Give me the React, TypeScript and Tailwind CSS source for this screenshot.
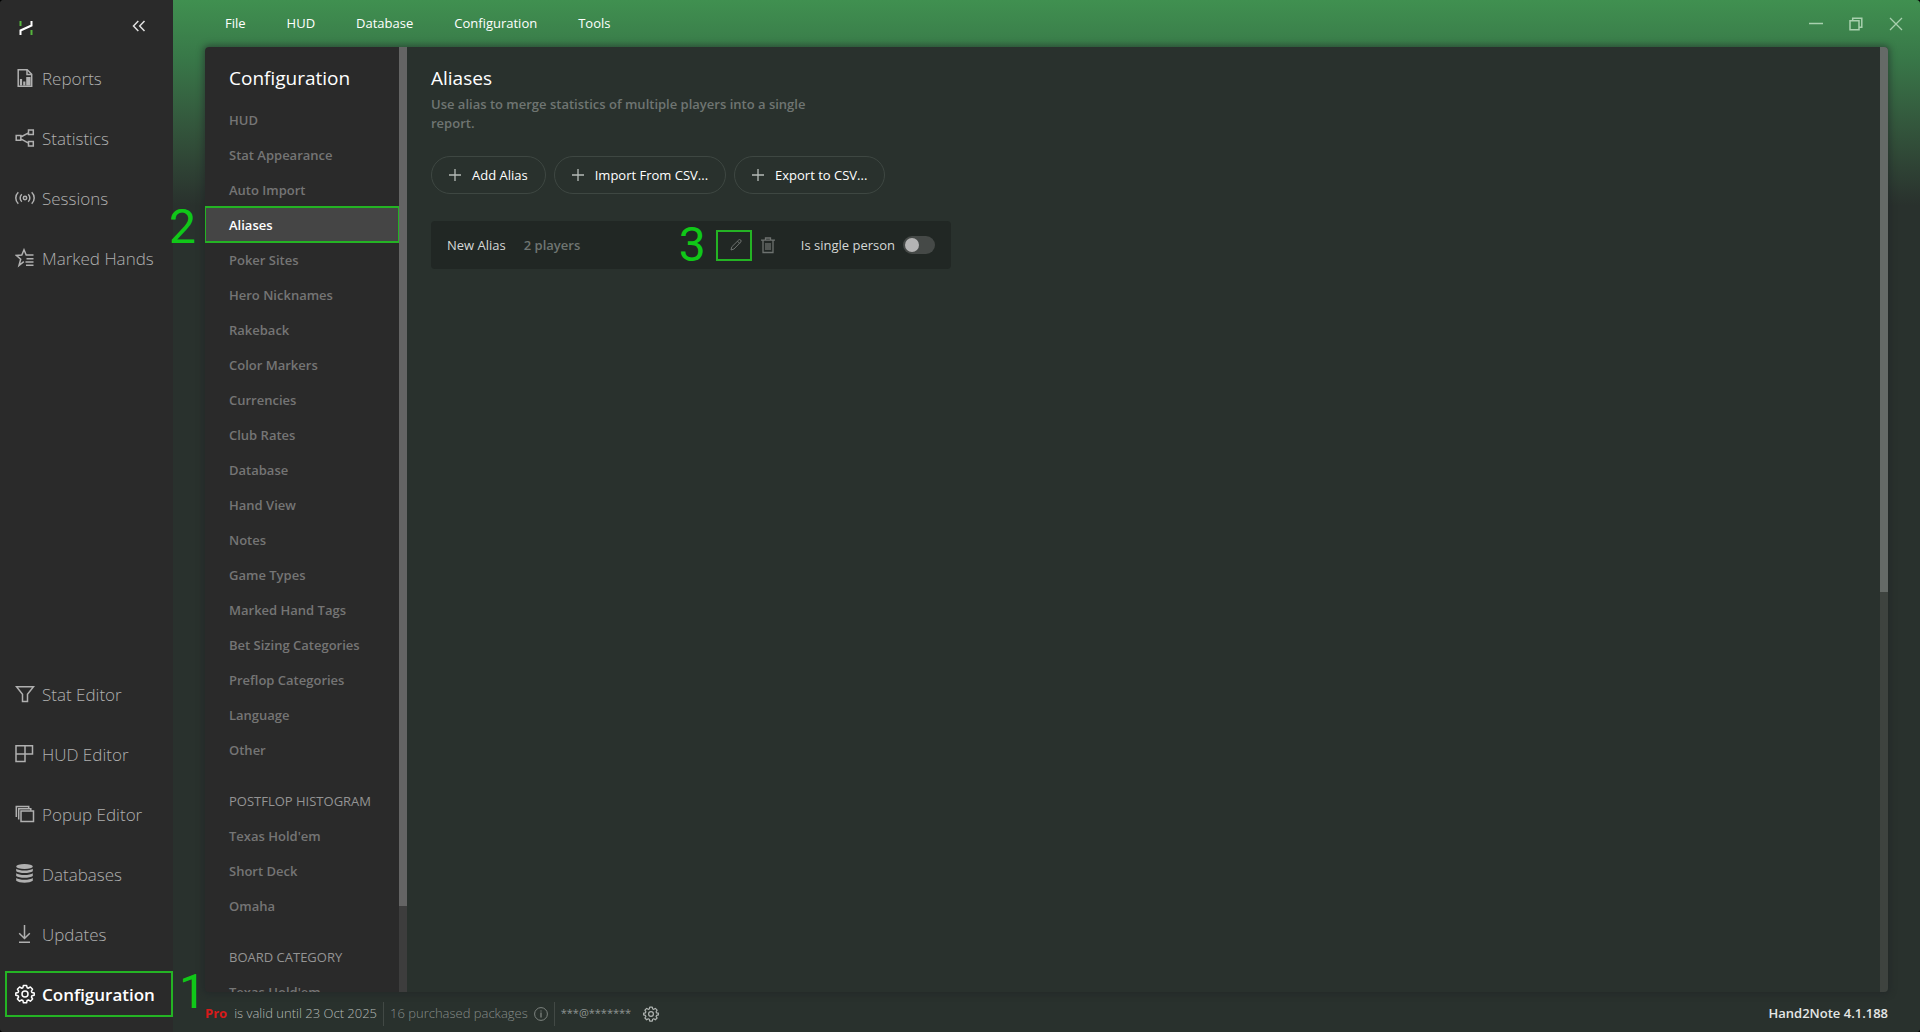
import React, { useState } from 'react';

type IconProps = { children: React.ReactNode; className?: string };

const Icon: React.FC<IconProps> = ({ children, className = 'w-5 h-5' }) => (
  <svg viewBox="0 0 20 20" fill="none" stroke="currentColor" strokeWidth="1.5" className={`shrink-0 ${className}`} aria-hidden="true">
    {children}
  </svg>
);

const GearIcon: React.FC<{ className?: string }> = ({ className }) => (
  <Icon className={className}>
    <path
      strokeLinejoin="round"
      d="M8.4 1.4h3.2l.5 2.3 1.3.5 2-1.2 2.2 2.2-1.2 2 .5 1.3 2.3.5v2.2l-2.3.5-.5 1.3 1.2 2-2.2 2.2-2-1.2-1.3.5-.5 2.3H8.4l-.5-2.3-1.3-.5-2 1.2-2.2-2.2 1.2-2-.5-1.3-2.3-.5V9l2.3-.5.5-1.3-1.2-2L4.600 3l2 1.200 1.300-.5z"
    />
    <circle cx="10" cy="10" r="3" />
  </Icon>
);

const icons: Record<string, React.ReactNode> = {
  Reports: (
    <Icon>
      <path d="M3.200 1.700h9l4.500 4.500v12.100H3.200z" />
      <path d="M12 2v4.500h4.500" />
      <path d="M6 17.500v-6.500M9.300 17.500v-4M12.300 17.500V9M14.500 17.500V9" strokeWidth="2.200" />
    </Icon>
  ),
  Statistics: (
    <Icon>
      <path d="M1.200 7.600h4.600v4.600H1.200zM13.500 2h4.800v4.400h-4.800zM13.500 13.500h4.800v4.400h-4.800zM5.800 9l7.700-4.200M5.800 10.800l7.700 4.400" />
    </Icon>
  ),
  Sessions: (
    <Icon>
      <circle cx="10" cy="10" r="1.700" />
      <path d="M6.800 6.300a5 5 0 0 0 0 7.400M13.200 6.300a5 5 0 0 1 0 7.400M3.300 4.200a8 8 0 0 0 0 11.600M16.700 4.200a8 8 0 0 1 0 11.600" />
    </Icon>
  ),
  'Marked Hands': (
    <Icon>
      <path d="M8.800 13.600L4 17.500l1.700-6.300L1.500 7.500l5.300-.4L9 1.800l2.200 5.300h7.300M11.500 10.700h7M10.500 14h8M11 17.300h7.500" />
    </Icon>
  ),
  'Stat Editor': (
    <Icon>
      <path d="M1.500 2.700h17l-6 7.600v7.200h-5v-7.200z" />
    </Icon>
  ),
  'HUD Editor': (
    <Icon>
      <path d="M1 1.700h16.500v8.300H1zM1 10v7.500h9V1.700" />
    </Icon>
  ),
  'Popup Editor': (
    <Icon>
      <path d="M6 7h12.500v10.500H6z" />
      <path d="M3.700 15.500V4.700h12.100v2M1.300 13V2.500h12.400v2" />
    </Icon>
  ),
  Databases: (
    <Icon>
      <ellipse cx="9.500" cy="2.500" rx="8.300" ry="2.500" fill="currentColor" stroke="none" />
      <path
        fill="currentColor"
        stroke="none"
        d="M1.200 4.700c3 2.400 13.600 2.400 16.600 0v2.600c-3 2.400-13.600 2.400-16.600 0zM1.200 9.300c3 2.400 13.600 2.400 16.600 0v2.600c-3 2.400-13.600 2.400-16.600 0zM1.200 13.900c3 2.400 13.600 2.400 16.600 0v2.800c-3 2.600-13.600 2.600-16.600 0z"
      />
    </Icon>
  ),
  Updates: (
    <Icon>
      <path d="M9.500 1v13M4.200 9.200l5.300 5.300 5.300-5.300M4 18.200h11" />
    </Icon>
  ),
  Configuration: <GearIcon />,
};

const topNav = ['Reports', 'Statistics', 'Sessions', 'Marked Hands'];
const bottomNav = ['Stat Editor', 'HUD Editor', 'Popup Editor', 'Databases', 'Updates', 'Configuration'];
const menu = ['File', 'HUD', 'Database', 'Configuration', 'Tools'];

const sections = [
  {
    title: '',
    items: [
      'HUD', 'Stat Appearance', 'Auto Import', 'Aliases', 'Poker Sites', 'Hero Nicknames', 'Rakeback',
      'Color Markers', 'Currencies', 'Club Rates', 'Database', 'Hand View', 'Notes', 'Game Types',
      'Marked Hand Tags', 'Bet Sizing Categories', 'Preflop Categories', 'Language', 'Other',
    ],
  },
  { title: 'POSTFLOP HISTOGRAM', items: ["Texas Hold'em", 'Short Deck', 'Omaha'] },
  { title: 'BOARD CATEGORY', items: ["Texas Hold'em"] },
];

const StepNumber: React.FC<{ value: number; className: string }> = ({ value, className }) => (
  <span className={`font-[Roboto,'Liberation_Sans',sans-serif] text-5xl leading-none font-normal text-[#10c818] ${className}`}>{value}</span>
);

const SidebarItem: React.FC<{ label: string }> = ({ label }) => {
  const active = label === 'Configuration';
  return (
    <li className="relative flex h-[60px] items-center pl-[5px]">
      <button
        className={`flex h-[46px] w-full items-center gap-[7px] border-2 pl-2 text-[17px] whitespace-nowrap ${
          active ? 'border-[#24b324] font-semibold text-white' : 'border-transparent font-light text-[#b0b0b0]'
        }`}
      >
        {icons[label]}
        <span className="pt-0.5">{label}</span>
      </button>
      {active && <StepNumber value={1} className="absolute top-1 left-[179px] z-20" />}
    </li>
  );
};

const Sidebar: React.FC = () => (
  <aside className="flex w-[173px] shrink-0 flex-col bg-[#2a2a2a] pb-2">
    <div className="flex h-12 items-center justify-between pr-[27px] pl-[19px]">
      <svg viewBox="0 0 14 14" fill="none" strokeWidth="2" className="mt-2 h-[14px] w-[14px]" aria-label="Hand2Note">
        <path d="M1.500 0v5M12.500 9v5" stroke="#55b53c" />
        <path d="M1.500 14V9.500l11-5V0" stroke="#fff" />
      </svg>
      <button aria-label="Collapse sidebar" className="mt-1 text-[#e0e0e0]">
        <svg viewBox="0 0 14 12" fill="none" stroke="currentColor" strokeWidth="1.500" className="h-3 w-[14px]">
          <path d="M6.300 1L1.500 6l4.800 5M12.500 1L7.700 6l4.800 5" />
        </svg>
      </button>
    </div>
    <ul>
      {topNav.map(label => <SidebarItem key={label} label={label} />)}
    </ul>
    <ul className="mt-auto">
      {bottomNav.map(label => <SidebarItem key={label} label={label} />)}
    </ul>
  </aside>
);

const TopBar: React.FC = () => (
  <header className="flex h-[47px] shrink-0 items-center justify-between pt-px pr-[17px] pl-[52px]">
    <nav className="flex gap-[41px] text-[13px] text-white">
      {menu.map(item => <button key={item}>{item}</button>)}
    </nav>
    <div className="flex items-center gap-[26px] text-[#a8d0ae]">
      <button aria-label="Minimize">
        <svg viewBox="0 0 14 14" stroke="currentColor" strokeWidth="1.500" className="h-[14px] w-[14px]"><path d="M0 6.500h14" /></svg>
      </button>
      <button aria-label="Restore">
        <svg viewBox="0 0 14 14" fill="none" stroke="currentColor" strokeWidth="1.500" className="h-[14px] w-[14px]">
          <path d="M1 3.700h9v9H1zM3.700 3.700V1.200h9.100v9H10" />
        </svg>
      </button>
      <button aria-label="Close">
        <svg viewBox="0 0 14 14" stroke="currentColor" strokeWidth="1.300" className="h-[14px] w-[14px]"><path d="M1 1l12 12M13 1L1 13" /></svg>
      </button>
    </div>
  </header>
);

const ConfigNav: React.FC = () => (
  <div className="relative flex w-[202px] shrink-0 rounded-l bg-[#2a2a2a]">
    <nav className="flex-1 overflow-hidden rounded-l text-[13px] font-semibold">
      <h2 className="mt-[17px] mb-[10px] pl-6 text-[19px] leading-7 font-normal text-white">Configuration</h2>
      {sections.map(section => (
        <div key={section.title} className="mb-4">
          {section.title && <h3 className="pt-px pl-6 leading-[34px] font-normal text-[#949494]">{section.title}</h3>}
          {section.items.map(item => (
            <button
              key={item}
              className={`block h-[35px] w-full pt-0.5 pl-6 text-left whitespace-nowrap ${
                item === 'Aliases'
                  ? 'bg-[#454545] text-white outline-2 -outline-offset-1 outline-[#24b324]'
                  : 'text-[#757575]'
              }`}
            >
              {item}
            </button>
          ))}
        </div>
      ))}
    </nav>
    <div className="w-2 shrink-0 bg-[#3d3d3d]">
      <div className="h-10/11 bg-[#646464]" />
    </div>
    <StepNumber value={2} className="absolute top-[156px] -left-9 z-20" />
  </div>
);

const PillButton: React.FC<{ label: string }> = ({ label }) => (
  <button className="flex h-[38px] items-center gap-[11px] rounded-full border border-[#3e4742] px-[17px] text-[13px] text-white">
    <svg viewBox="0 0 12 12" stroke="#b5bab7" strokeWidth="1.300" className="h-3 w-3" aria-hidden="true"><path d="M6 0v12M0 6h12" /></svg>
    <span className="pt-0.5">{label}</span>
  </button>
);

const AliasRow: React.FC = () => {
  const [single, setSingle] = useState(false);
  return (
    <div className="mt-[27px] flex h-12 w-[520px] max-w-full items-center rounded bg-[#212724] px-4 text-[13px]">
      <span className="pt-0.5 text-[#d5d8d6]">New Alias</span>
      <span className="ml-[18px] pt-0.5 font-semibold text-[#6f7572]">2 players</span>
      <StepNumber value={3} className="mr-[10px] ml-auto" />
      <button aria-label="Edit alias" className="flex h-[31px] w-9 items-center justify-center border-2 border-[#24b324] text-[#6d726f]">
        <svg viewBox="0 0 12 12" fill="none" stroke="currentColor" className="ml-1 h-3 w-3">
          <path d="M1 11l.8-3.200L8.700 1a1.200 1.200 0 0 1 2 2L4 10zM7.500 2.200l2.200 2.200" />
        </svg>
      </button>
      <button aria-label="Delete alias" className="ml-[9px] text-[#6d726f]">
        <svg viewBox="0 0 14 17" fill="none" stroke="currentColor" strokeWidth="1.300" className="h-[17px] w-[14px]">
          <path d="M0 3.200h14M4.500 3V1h5v2M2 3.200v12.300h10V3.200M5 6v7M7 6v7M9 6v7" />
        </svg>
      </button>
      <label htmlFor="single-person" className="mr-2 ml-[26px] pt-0.5 text-[#d5d8d6]">Is single person</label>
      <input
        id="single-person"
        type="checkbox"
        checked={single}
        onChange={e => setSingle(e.target.checked)}
        className="flex h-[18px] w-8 appearance-none items-center rounded-full bg-[#454947] px-[2px] before:h-[14px] before:w-[14px] before:rounded-full before:bg-[#b4b4b4] checked:justify-end"
      />
    </div>
  );
};

const Aliases: React.FC = () => (
  <main className="flex min-w-0 flex-1 rounded-r bg-[#29312d]">
    <div className="flex-1 pt-[17px] pl-6">
      <h1 className="text-[19px] leading-7 text-white">Aliases</h1>
      <p className="mt-[3px] w-[400px] text-[13px] leading-[19px] font-semibold text-[#6f7572]">
        Use alias to merge statistics of multiple players into a single report.
      </p>
      <div className="mt-[23px] flex gap-2">
        <PillButton label="Add Alias" />
        <PillButton label="Import From CSV..." />
        <PillButton label="Export to CSV..." />
      </div>
      <AliasRow />
    </div>
    <div className="w-2 shrink-0 overflow-hidden rounded-r bg-[#3e433f]">
      <div className="h-15/26 bg-[#656a67]" />
    </div>
  </main>
);

const StatusBar: React.FC = () => (
  <footer className="flex h-10 shrink-0 items-center px-8 pt-[3px] text-[13px]">
    <span className="font-bold text-[#d81a1a]">Pro</span>
    <span className="ml-[7px] font-light text-[#b4b9b6]">is valid until 23 Oct 2025</span>
    <span className="ml-[6px] h-6 w-px bg-[#424945]" />
    <span className="ml-[6px] font-light text-[#868c89]">16 purchased packages</span>
    <svg viewBox="0 0 14 14" fill="none" stroke="#7d837f" className="ml-[6px] h-[14px] w-[14px]" aria-hidden="true">
      <circle cx="7" cy="7" r="6.400" />
      <path d="M7 3.500v1M7 5.500v5" strokeWidth="1.300" />
    </svg>
    <span className="ml-[6px] h-6 w-px bg-[#424945]" />
    <span className="ml-[6px] text-[11px] text-[#8f9592]">***@*******</span>
    <button aria-label="Account settings" className="ml-3 text-[#b0b5b2]"><GearIcon className="h-4 w-4" /></button>
    <span className="ml-auto font-semibold text-[#e4e6e5]">Hand2Note 4.1.188</span>
  </footer>
);

const App: React.FC = () => (
  <div className="h-screen bg-black">
    <div className="flex h-full overflow-hidden rounded bg-[#29312d] font-['Open_Sans','Noto_Sans',sans-serif]">
      <Sidebar />
      <div className="flex min-w-0 flex-1 flex-col bg-linear-to-b from-[#409050] via-[#387748] via-[60px] to-[#29312d] to-[205px]">
        <TopBar />
        <div className="mr-8 ml-8 flex min-h-0 flex-1 rounded shadow-[0_0_6px_2px_rgba(30,34,38,0.5)]">
          <ConfigNav />
          <Aliases />
        </div>
        <StatusBar />
      </div>
    </div>
  </div>
);

export default App;
